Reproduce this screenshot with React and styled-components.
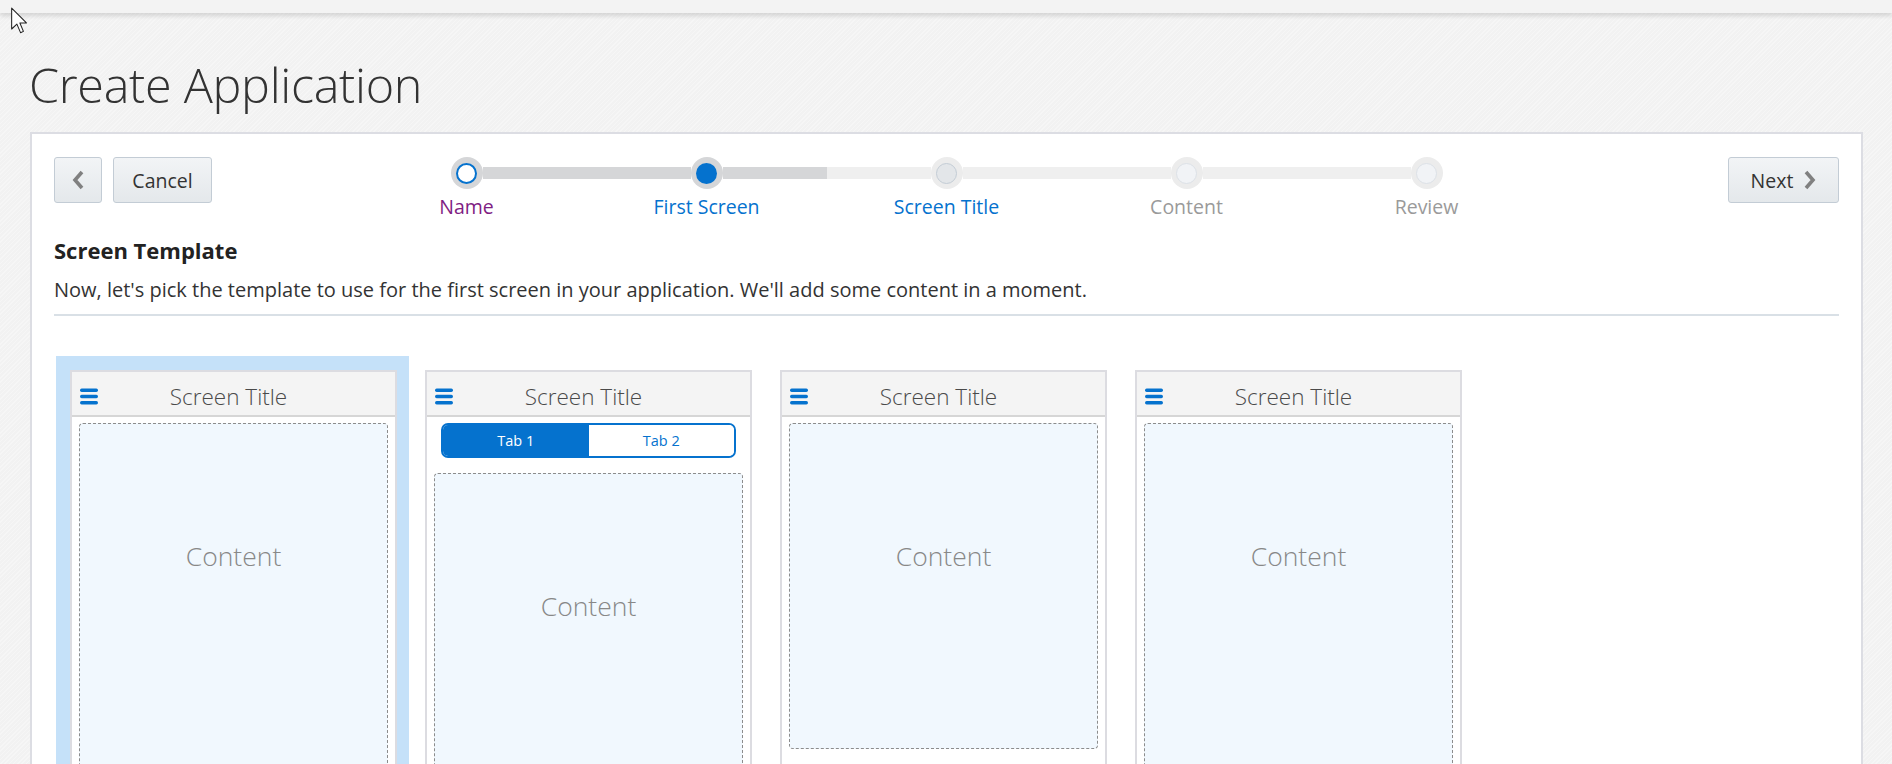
import React from 'react';
import styled, { createGlobalStyle } from 'styled-components';

const GlobalStyle = createGlobalStyle`
    html, body {
        margin: 0;
        padding: 0;
        height: 100%;
        overflow: hidden;
    }
    body {
        font-family: "Open Sans", "Noto Sans", sans-serif;
        color: #333;
        background-color: #f4f4f4;
        background-image: repeating-linear-gradient(135deg, #f6f6f6 0 1px, #f2f2f2 1px 3px);
    }
`

const TopBar = styled.div`
    position: relative;
    height: 13px;
    background: #f3f3f3;
    box-shadow: 0 3px 4px rgba(0, 0, 0, 0.13);
`

const Cursor = styled.svg`
    position: absolute;
    left: 11px;
    top: 7px;
    z-index: 5;
`

const Main = styled.div`
    padding: 0 29px 0 30px;
`

const Title = styled.h1`
    margin: 40px 0 17px -1px;
    font-weight: 300;
    font-size: 48.5px;
    line-height: 62px;
    letter-spacing: -0.3px;
    color: #333;
`

const Panel = styled.div`
    background: #fff;
    border: 2px solid #dcdde3;
    border-bottom: none;
    padding: 23px 22px 0;
    height: 700px;
`

const Toolbar = styled.div`
    display: grid;
    grid-template-columns: 1fr 1200px 1fr;
    align-items: start;
`

const ButtonGroup = styled.div`
    display: flex;
    gap: 11px;
`

const Button = styled.button`
    height: 46px;
    width: ${p => p.$width}px;
    box-sizing: border-box;
    display: inline-flex;
    align-items: center;
    justify-content: center;
    gap: 10px;
    padding: 0;
    border: 1px solid #c3ccd5;
    border-radius: 3px;
    background: linear-gradient(#f2f4f6, #e4e8eb);
    font-family: inherit;
    font-size: 19.5px;
    color: #333;
    justify-self: ${p => p.$end ? 'end' : 'auto'};
`

const Stepper = styled.div`
    display: flex;
    justify-content: center;
`

const Step = styled.div`
    width: 240px;
    display: flex;
    flex-direction: column;
    align-items: center;
`

const CircleRow = styled.div`
    width: 100%;
    height: 32px;
    display: flex;
    align-items: center;
`

const Track = styled.div`
    flex: 1;
    height: 12px;
    background: ${p => p.$color};
`

const Ring = styled.div`
    width: 32px;
    height: 32px;
    border-radius: 50%;
    background: ${p => p.$color};
    display: flex;
    align-items: center;
    justify-content: center;
`

const Dot = styled.div`
    width: 21px;
    height: 21px;
    box-sizing: border-box;
    border-radius: 50%;
    background: ${p => p.$fill};
    border: ${p => p.$border};
`

const StepLabel = styled.div`
    margin-top: 6px;
    font-size: 19.5px;
    line-height: 24px;
    color: ${p => p.$color};
`

const Heading = styled.h2`
    margin: 16px 0 0;
    font-weight: 700;
    font-size: 22px;
    line-height: 30px;
    color: #222;
`

const Description = styled.p`
    margin: 12px 0 0;
    font-size: 20px;
    line-height: 26px;
    color: #333;
`

const Rule = styled.div`
    margin-top: 11px;
    height: 2px;
    background: #d9e0e6;
`

const CardRow = styled.div`
    display: flex;
    gap: 2px;
    margin: 40px 0 0 2px;
`

const CardSlot = styled.div`
    width: 353px;
    height: 440px;
    box-sizing: border-box;
    padding: 14px 12px 0 14px;
    background: ${p => p.$selected ? '#c5e1f9' : 'transparent'};
`

const Card = styled.div`
    height: 100%;
    box-sizing: border-box;
    background: #fff;
    border: 2px solid #dcdce1;
    border-bottom: none;
    display: flex;
    flex-direction: column;
    overflow: hidden;
    & > * {
        flex-shrink: 0;
    }
`

const CardHeader = styled.div`
    height: 45px;
    box-sizing: border-box;
    padding: 6px 8px 0;
    background: #f4f4f4;
    border-bottom: 2px solid #d6d6d6;
    display: grid;
    grid-template-columns: 1fr auto 1fr;
    align-items: center;
`

const CardTitle = styled.div`
    font-weight: 300;
    font-size: 22.5px;
    line-height: 26px;
    color: #4a4a4a;
    margin-right: 10px;
`

const Tabs = styled.div`
    margin: 6px 14px 0;
    height: 35px;
    box-sizing: border-box;
    border: 2px solid #0572ce;
    border-radius: 7px;
    overflow: hidden;
    display: flex;
`

const Tab = styled.div`
    flex: 1;
    display: flex;
    align-items: center;
    justify-content: center;
    font-size: 14.5px;
    background: ${p => p.$active ? '#0572ce' : '#fff'};
    color: ${p => p.$active ? '#fff' : '#0572ce'};
`

const ContentBox = styled.div`
    margin: ${p => p.$top}px 7px 0;
    height: ${p => p.$height}px;
    box-sizing: border-box;
    border: 1px dashed #8c8c8c;
    border-radius: 4px;
    background: #f1f8fe;
    text-align: center;
`

const ContentLabel = styled.div`
    padding-top: 117px;
    font-weight: 300;
    font-size: 26.5px;
    line-height: 30px;
    color: #888;
`

const Chevron = ({ left }) => (
    <svg width="13" height="20" viewBox="0 0 13 20">
        <polyline
            points={left ? "10,2 3,10 10,18" : "3,2 10,10 3,18"}
            fill="none"
            stroke="#808080"
            strokeWidth="3.6"
        />
    </svg>
)

const Hamburger = () => (
    <svg width="18" height="17" viewBox="0 0 18 17">
        <rect x="0" y="0.5" width="18" height="3.4" rx="1.7" fill="#0572ce" />
        <rect x="0" y="6.8" width="18" height="3.4" rx="1.7" fill="#0572ce" />
        <rect x="0" y="13.1" width="18" height="3.4" rx="1.7" fill="#0572ce" />
    </svg>
)

const DARK = '#d5d6d8'
const LIGHT = '#efefef'
const BLUE = '#0572ce'

const steps = [
    { label: 'Name', color: '#7f1d83', left: 'transparent', right: DARK, ring: DARK, fill: '#fff', border: `2.5px solid ${BLUE}` },
    { label: 'First Screen', color: BLUE, left: DARK, right: DARK, ring: DARK, fill: BLUE, border: 'none' },
    { label: 'Screen Title', color: BLUE, left: LIGHT, right: LIGHT, ring: '#ececec', fill: '#e3e6e9', border: '1px solid #c3ccd5' },
    { label: 'Content', color: '#9a9a9a', left: LIGHT, right: LIGHT, ring: '#ececec', fill: '#f1f3f6', border: '1px solid #dce1e7' },
    { label: 'Review', color: '#9a9a9a', left: LIGHT, right: 'transparent', ring: '#ececec', fill: '#f1f3f6', border: '1px solid #dce1e7' },
]

const templates = [
    { selected: true, tabs: false, height: 400 },
    { selected: false, tabs: true, height: 400 },
    { selected: false, tabs: false, height: 326 },
    { selected: false, tabs: false, height: 400 },
]

const App = () => {
    return (
        <>
            <GlobalStyle />
            <TopBar />
            <Cursor width="17" height="27" viewBox="-0.5 -0.5 13 20">
                <path d="M0,0 L0,16 L4,12.3 L6.8,18.8 L9,17.8 L6.3,11.4 L11.3,11.4 Z" fill="#fff" stroke="#222" strokeWidth="0.8" strokeLinejoin="round" />
            </Cursor>
            <Main>
                <Title>Create Application</Title>
                <Panel>
                    <Toolbar>
                        <ButtonGroup>
                            <Button $width={48}><Chevron left /></Button>
                            <Button $width={99}>Cancel</Button>
                        </ButtonGroup>
                        <Stepper>
                            {steps.map(s => (
                                <Step key={s.label}>
                                    <CircleRow>
                                        <Track $color={s.left} />
                                        <Ring $color={s.ring}>
                                            <Dot $fill={s.fill} $border={s.border} />
                                        </Ring>
                                        <Track $color={s.right} />
                                    </CircleRow>
                                    <StepLabel $color={s.color}>{s.label}</StepLabel>
                                </Step>
                            ))}
                        </Stepper>
                        <Button $width={111} $end>Next <Chevron /></Button>
                    </Toolbar>
                    <Heading>Screen Template</Heading>
                    <Description>Now, let's pick the template to use for the first screen in your application. We'll add some content in a moment.</Description>
                    <Rule />
                    <CardRow>
                        {templates.map((t, i) => (
                            <CardSlot key={i} $selected={t.selected}>
                                <Card>
                                    <CardHeader>
                                        <Hamburger />
                                        <CardTitle>Screen Title</CardTitle>
                                    </CardHeader>
                                    {t.tabs && (
                                        <Tabs>
                                            <Tab $active>Tab 1</Tab>
                                            <Tab>Tab 2</Tab>
                                        </Tabs>
                                    )}
                                    <ContentBox $top={t.tabs ? 15 : 6} $height={t.height}>
                                        <ContentLabel>Content</ContentLabel>
                                    </ContentBox>
                                </Card>
                            </CardSlot>
                        ))}
                    </CardRow>
                </Panel>
            </Main>
        </>
    )
}

export default App;
